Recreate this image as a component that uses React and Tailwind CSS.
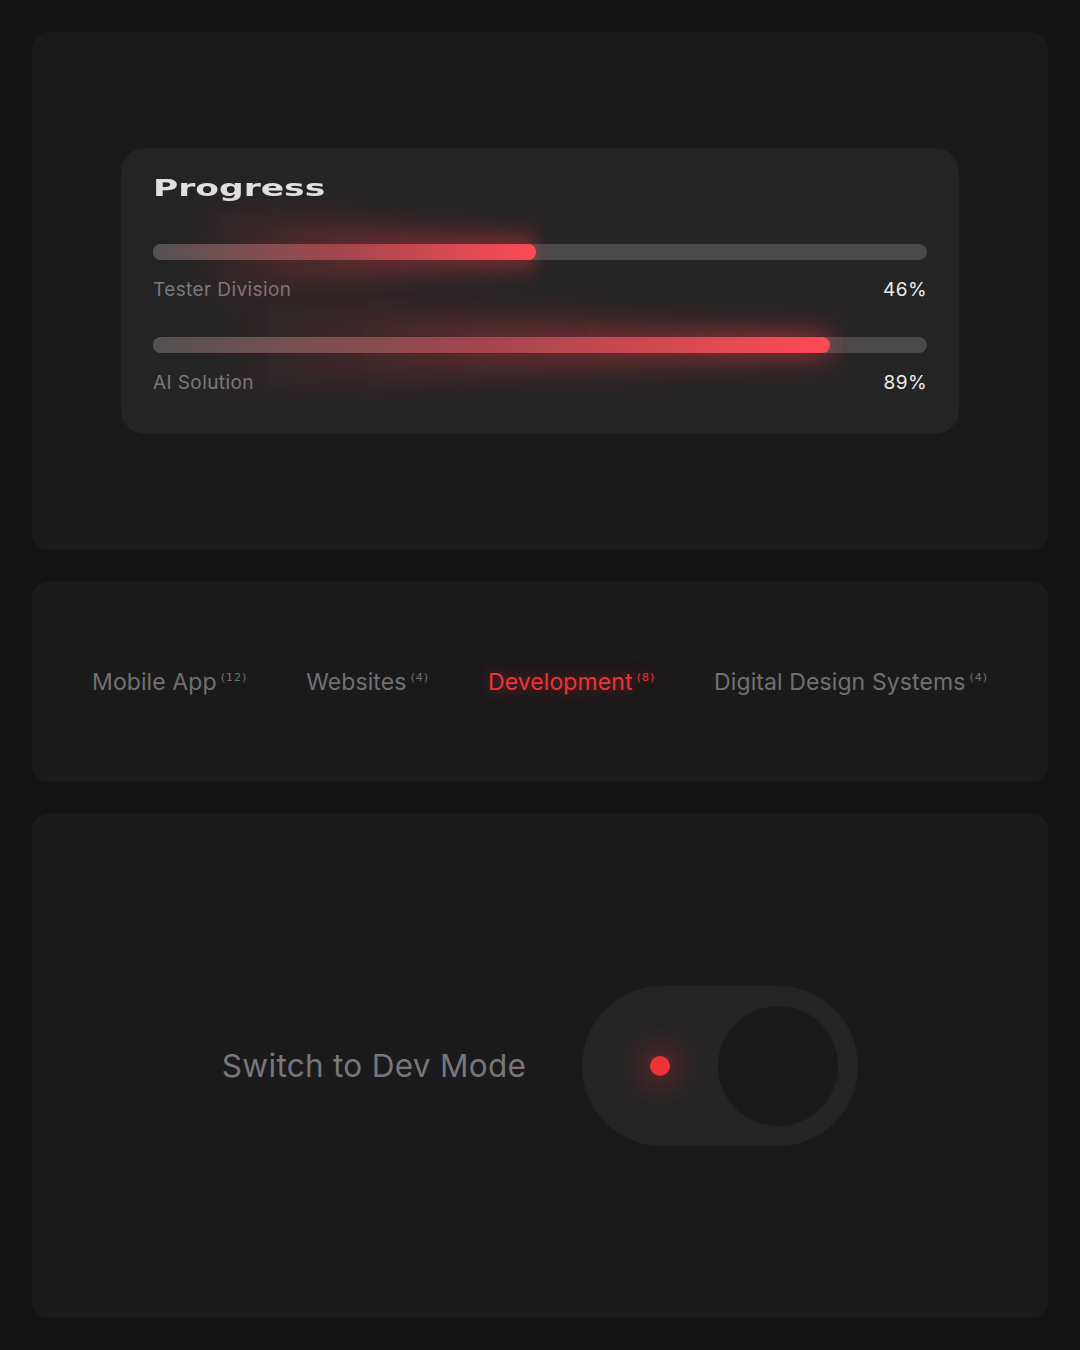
import React from 'react';

const bars = [
    { label: 'Tester Division', value: '46%', fill: 49.5 },
    { label: 'AI Solution', value: '89%', fill: 87.5 },
];

const tabs = [
    { label: 'Mobile App', count: 12 },
    { label: 'Websites', count: 4 },
    { label: 'Development', count: 8, active: true },
    { label: 'Digital Design Systems', count: 4 },
];

// Soft red cone behind the filled part of a bar
const Glow = ({ id }) => (
    <svg className="absolute left-0 top-1/2 -translate-y-1/2 w-full h-[160px] overflow-visible pointer-events-none" viewBox="0 0 100 160" preserveAspectRatio="none">
        <defs>
            <linearGradient id={`g-${id}`} x1="0" x2="1" y1="0" y2="0">
                <stop offset="0" stopColor="#ff3b47" stopOpacity="0" />
                <stop offset="0.35" stopColor="#ff3b47" stopOpacity="0.2" />
                <stop offset="0.75" stopColor="#ff3b47" stopOpacity="0.38" />
                <stop offset="1" stopColor="#ff3b47" stopOpacity="0.7" />
            </linearGradient>
            <filter id={`b-${id}`} x="-50%" y="-50%" width="200%" height="200%">
                <feGaussianBlur stdDeviation="2 14" />
            </filter>
        </defs>
        <polygon points="10,36 100,72 100,88 10,124" fill={`url(#g-${id})`} filter={`url(#b-${id})`} />
    </svg>
);

const ProgressRow = ({ bar, i }) => (
    <div>
        <div className="relative h-4 rounded-full bg-[#4a494a]">
            <div className="absolute inset-y-0 left-0" style={{ width: `${bar.fill}%` }}>
                <Glow id={i} />
                <div className="relative h-full rounded-full bg-gradient-to-r from-[#525152] via-[#a5454c] to-[#ff4a55]" />
            </div>
        </div>
        <div className="flex justify-between items-center mt-[18px] text-[19px] leading-6 tracking-[0.4px]">
            <span className="text-[#7a787c]">{bar.label}</span>
            <span className="text-[#ececec]">{bar.value}</span>
        </div>
    </div>
);

export default function App() {
    return (
        <div className="min-h-[1350px] bg-[#131314] p-8 flex flex-col gap-8 font-['Inter','Liberation_Sans',sans-serif]">
            {/* Progress */}
            <section className="h-[518px] rounded-2xl bg-[#1b1a1b] flex items-center justify-center">
                <div className="w-[838px] h-[286px] rounded-[24px] bg-[#252425] px-8 pt-6 overflow-hidden">
                    <h2 className="font-['DejaVu_Sans',sans-serif] font-bold text-[23px] leading-8 text-[#e0e0e0] origin-left scale-x-150 inline-block">Progress</h2>
                    <div className="mt-10 flex flex-col gap-[35px]">
                        {bars.map((bar, i) => <ProgressRow key={i} bar={bar} i={i} />)}
                    </div>
                </div>
            </section>

            {/* Tabs */}
            <section className="h-[200px] rounded-2xl bg-[#1b1a1b] flex items-center justify-between px-[60px]">
                {tabs.map((t) => (
                    <div key={t.label} className={`flex items-start text-[23px] leading-8 tracking-[0.1px] ${t.active ? 'text-[#ee3338] [text-shadow:0_0_14px_rgba(238,51,56,0.55)]' : 'text-[#717073]'}`}>
                        <span>{t.label}</span>
                        <span className="ml-1 -mt-[4px] text-[11px] font-['DejaVu_Sans',sans-serif] tracking-[1px]">({t.count})</span>
                    </div>
                ))}
            </section>

            {/* Dev mode switch */}
            <section className="h-[504px] rounded-2xl bg-[#1b1a1b] flex items-center justify-center gap-14">
                <span className="text-[31.5px] text-[#77767a] tracking-[0.3px]">Switch to Dev Mode</span>
                <div className="w-[276px] h-[160px] rounded-full bg-[#252425] flex items-center pl-[68px] pr-5">
                    <div className="w-5 h-5 rounded-full bg-[#ee3338] shadow-[0_0_28px_10px_rgba(238,51,56,0.28)]" />
                    <div className="ml-auto w-[120px] h-[120px] rounded-full bg-[#1b1a1b]" />
                </div>
            </section>
        </div>
    );
}
